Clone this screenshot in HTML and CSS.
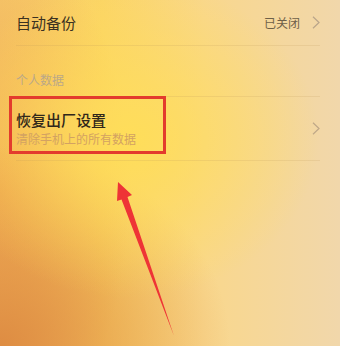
FILE: index.html
```html
<!DOCTYPE html>
<html lang="zh-CN">
<head>
<meta charset="utf-8">
<title>设置</title>
<link rel="stylesheet" href="styles.css">
</head>
<body>
<div class="page">
  <div class="list">
    <div class="row row-single">
      <span class="title">自动备份</span>
      <span class="trail">
        <span class="value">已关闭</span>
        <svg class="chev" width="8" height="13" viewBox="0 0 8 13"><path d="M1 0.8 L7 6.5 L1 12.2" fill="none" stroke="#b9a58a" stroke-width="1.2"/></svg>
      </span>
    </div>
    <div class="section">个人数据</div>
    <div class="row row-double">
      <div class="texts">
        <span class="title strong">恢复出厂设置</span>
        <span class="sub">清除手机上的所有数据</span>
      </div>
      <svg class="chev" width="8" height="13" viewBox="0 0 8 13"><path d="M1 0.8 L7 6.5 L1 12.2" fill="none" stroke="#bfa888" stroke-width="1.2"/></svg>
      <div class="highlight"></div>
    </div>
  </div>
  <svg class="arrow" width="340" height="346" viewBox="0 0 340 346">
    <polygon points="118,182 132,195 127.5,197 174,336 121.5,199.5 117,201" fill="#ee3436"/>
  </svg>
</div>
</body>
</html>
```
FILE: styles.css
```css
html, body {
  margin: 0;
  padding: 0;
}
body {
  font-family: "Noto Sans CJK SC", "Noto Sans", sans-serif;
}
.page {
  position: relative;
  width: 340px;
  height: 346px;
  overflow: hidden;
  background:
    radial-gradient(ellipse 190px 160px at 38% 40%, rgba(255,222,88,0.95) 0%, rgba(255,222,88,0) 100%),
    radial-gradient(ellipse 230px 200px at 0% 100%, rgba(222,140,66,1) 0%, rgba(226,150,70,0) 100%),
    radial-gradient(ellipse 130px 260px at 0% 55%, rgba(240,165,78,0.85) 0%, rgba(240,165,78,0) 100%),
    linear-gradient(to right, #f6c96c 0%, #fbd466 30%, #f9d78c 60%, #f1d7ab 100%);
}
.list {
  margin: 0 20px 0 16px;
  position: relative;
}
.row {
  display: flex;
  align-items: center;
  justify-content: space-between;
  border-bottom: 1px solid rgba(190, 150, 90, 0.18);
  position: relative;
}
.row-single {
  height: 45px;
}
.row-double {
  height: 63px;
}
.title {
  font-size: 15px;
  color: #3b3121;
  line-height: 18px;
}
.strong {
  font-weight: 500;
  color: #30271a;
}
.trail {
  display: flex;
  align-items: center;
  gap: 12px;
}
.value {
  font-size: 12px;
  color: #6e6048;
}
.chev {
  display: block;
}
.section {
  height: 51px;
  box-sizing: border-box;
  border-bottom: 1px solid rgba(190, 150, 90, 0.18);
  font-size: 12px;
  color: #bba888;
  display: flex;
  align-items: flex-end;
  padding-bottom: 8px;
}
.texts {
  display: flex;
  flex-direction: column;
  gap: 2px;
  margin-top: 1px;
}
.sub {
  font-size: 12px;
  color: #d3a262;
  line-height: 16px;
}
.highlight {
  position: absolute;
  left: -7px;
  top: -1px;
  width: 151px;
  height: 52px;
  border: 3px solid #e33b2d;
}
.arrow {
  position: absolute;
  left: 0;
  top: 0;
}
```
